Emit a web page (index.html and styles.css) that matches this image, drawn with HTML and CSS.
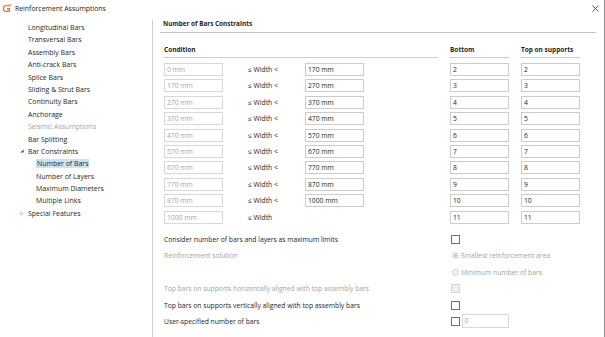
FILE: index.html
```html
<!DOCTYPE html>
<html>
<head>
<meta charset="utf-8">
<link rel="stylesheet" href="styles.css">
</head>
<body>
<div class="window">
  <div class="titlebar">
    <svg class="app-icon" viewBox="0 0 10 9" aria-hidden="true">
      <path d="M8.6 1.6 H4.2 Q1.4 1.6 1.4 4.5 Q1.4 7.4 4.2 7.4 H7.4 V4.8 H5" fill="none" stroke="#e9792b" stroke-width="1.4"/>
      <path d="M6.6 0.6 L9.6 0.6" stroke="#f4a45d" stroke-width="0.8"/>
    </svg>
    <span class="title">Reinforcement Assumptions</span>
    <svg class="close" viewBox="0 0 8 8" aria-hidden="true">
      <path d="M0.5 0.5 L7.5 7.5 M7.5 0.5 L0.5 7.5" stroke="#333" stroke-width="0.9"/>
    </svg>
  </div>
  <div class="main">
    <ul class="tree">
      <li class="node">Longitudinal Bars</li>
      <li class="node">Transversal Bars</li>
      <li class="node">Assembly Bars</li>
      <li class="node">Anti-crack Bars</li>
      <li class="node">Splice Bars</li>
      <li class="node">Sliding &amp; Strut Bars</li>
      <li class="node">Continuity Bars</li>
      <li class="node">Anchorage</li>
      <li class="node muted">Seismic Assumptions</li>
      <li class="node">Bar Splitting</li>
      <li class="node toggled"><span class="toggle"><svg viewBox="0 0 5 5" class="tri"><path d="M4.5 0.5 V4.5 H0.5 Z" fill="#4a4a4a"/></svg></span>Bar Constraints</li>
      <li class="node sub"><span class="sel">Number of Bars</span></li>
      <li class="node sub">Number of Layers</li>
      <li class="node sub">Maximum Diameters</li>
      <li class="node sub">Multiple Links</li>
      <li class="node toggled"><span class="toggle"><svg viewBox="0 0 5 6" class="tri2"><path d="M1 0.8 L4.2 3 L1 5.2 Z" fill="none" stroke="#a0a0a0" stroke-width="0.7"/></svg></span>Special Features</li>
    </ul>
    <section class="panel">
      <div class="heading">Number of Bars Constraints</div>
      <div class="grid">
        <div class="col-head">Condition</div>
        <div class="col-head">Bottom</div>
        <div class="col-head">Top on supports</div>

        <div class="cond"><span class="field dim">0 mm</span><span class="op">≤ Width &lt;</span><span class="field">170 mm</span></div>
        <div class="cell"><span class="field">2</span></div>
        <div class="cell"><span class="field">2</span></div>

        <div class="cond"><span class="field dim">170 mm</span><span class="op">≤ Width &lt;</span><span class="field">270 mm</span></div>
        <div class="cell"><span class="field">3</span></div>
        <div class="cell"><span class="field">3</span></div>

        <div class="cond"><span class="field dim">270 mm</span><span class="op">≤ Width &lt;</span><span class="field">370 mm</span></div>
        <div class="cell"><span class="field">4</span></div>
        <div class="cell"><span class="field">4</span></div>

        <div class="cond"><span class="field dim">370 mm</span><span class="op">≤ Width &lt;</span><span class="field">470 mm</span></div>
        <div class="cell"><span class="field">5</span></div>
        <div class="cell"><span class="field">5</span></div>

        <div class="cond"><span class="field dim">470 mm</span><span class="op">≤ Width &lt;</span><span class="field">570 mm</span></div>
        <div class="cell"><span class="field">6</span></div>
        <div class="cell"><span class="field">6</span></div>

        <div class="cond"><span class="field dim">570 mm</span><span class="op">≤ Width &lt;</span><span class="field">670 mm</span></div>
        <div class="cell"><span class="field">7</span></div>
        <div class="cell"><span class="field">7</span></div>

        <div class="cond"><span class="field dim">670 mm</span><span class="op">≤ Width &lt;</span><span class="field">770 mm</span></div>
        <div class="cell"><span class="field">8</span></div>
        <div class="cell"><span class="field">8</span></div>

        <div class="cond"><span class="field dim">770 mm</span><span class="op">≤ Width &lt;</span><span class="field">870 mm</span></div>
        <div class="cell"><span class="field">9</span></div>
        <div class="cell"><span class="field">9</span></div>

        <div class="cond"><span class="field dim">870 mm</span><span class="op">≤ Width &lt;</span><span class="field">1000 mm</span></div>
        <div class="cell"><span class="field">10</span></div>
        <div class="cell"><span class="field">10</span></div>

        <div class="cond"><span class="field dim">1000 mm</span><span class="op">≤ Width</span></div>
        <div class="cell"><span class="field">11</span></div>
        <div class="cell"><span class="field">11</span></div>
      </div>

      <div class="options">
        <div class="opt-label">Consider number of bars and layers as maximum limits</div>
        <div class="opt-ctrl"><span class="cb"></span></div>

        <div class="opt-label muted">Reinforcement solution</div>
        <div class="opt-ctrl muted"><span class="radio on"></span>Smallest reinforcement area</div>

        <div class="opt-label"></div>
        <div class="opt-ctrl muted"><span class="radio"></span>Minimum number of bars</div>

        <div class="opt-label muted">Top bars on supports horizontally aligned with top assembly bars</div>
        <div class="opt-ctrl"><span class="cb disabled"></span></div>

        <div class="opt-label">Top bars on supports vertically aligned with top assembly bars</div>
        <div class="opt-ctrl"><span class="cb"></span></div>

        <div class="opt-label">User-specified number of bars</div>
        <div class="opt-ctrl"><span class="cb"></span><span class="field small dim">0</span></div>
      </div>
    </section>
  </div>
</div>
</body>
</html>
```

FILE: styles.css
```css
* { box-sizing: border-box; margin: 0; padding: 0; }

body {
  width: 605px;
  height: 337px;
  overflow: hidden;
  background: #ffffff;
  font-family: "Open Sans", "Noto Sans", sans-serif;
  font-size: 6.75px;
  color: #1e1e1e;
}

.window {
  width: 605px;
  height: 337px;
  border-right: 1px solid #8c8c8c;
  display: flex;
  flex-direction: column;
}

.titlebar {
  height: 16px;
  display: flex;
  align-items: center;
  padding: 0 5px 0 2px;
  font-size: 6.9px;
  color: #222;
}

.app-icon { width: 10px; height: 9px; margin-right: 3px; }
.title { flex: 1; }
.close { width: 7px; height: 7px; }

.main {
  flex: 1;
  display: flex;
  min-height: 0;
}

.tree {
  width: 153px;
  margin-top: 4px;
  padding-top: 1.3px;
  border-right: 1px solid #cfcfcf;
  list-style: none;
  font-size: 6.95px;
}

.node {
  display: flex;
  align-items: center;
  height: 12.4px;
  padding-left: 28px;
  white-space: nowrap;
  color: #262626;
}

.node.toggled { padding-left: 20px; }
.node.sub { padding-left: 36px; }
.muted { color: #a3a3a3 !important; }

.toggle {
  width: 8px;
  display: flex;
  align-items: center;
}
.tri { width: 4px; height: 4px; }
.tri2 { width: 4px; height: 5px; }

.sel {
  background: #c9e4f1;
  padding: 0 1px;
  line-height: 9px;
}

.panel {
  flex: 1;
  padding: 2px 8px 0 7px;
  display: flex;
  flex-direction: column;
}

.heading {
  line-height: 12px;
  padding: 0 0 2px 3px;
  font-weight: 700;
  font-size: 6.4px;
  border-bottom: 1px solid #c4c4c4;
}

.grid {
  display: grid;
  grid-template-columns: 275px 60px 60px;
  column-gap: 11px;
  row-gap: 3.4px;
  margin: 11px 0 0 3px;
}

.col-head {
  font-weight: 700;
  font-size: 6.5px;
  line-height: 12px;
  padding: 0 0 1px 1px;
  border-bottom: 1px solid #d0d0d0;
  margin-bottom: 1.6px;
}

.cond, .cell {
  display: flex;
  align-items: center;
  padding-left: 1px;
}

.field {
  display: block;
  width: 59px;
  height: 13px;
  border: 1px solid #cccccc;
  padding-left: 2px;
  line-height: 11px;
  color: #1e1e1e;
  background: #fff;
  white-space: nowrap;
}

.field.dim { color: #a6a6a6; border-color: #d8d8d8; }

.op {
  width: 57px;
  margin-left: 25px;
}

.options {
  display: grid;
  grid-template-columns: 286px 1fr;
  grid-auto-rows: 16.4px;
  margin: 7.8px 0 0 4px;
}

.opt-label {
  display: flex;
  align-items: center;
  white-space: nowrap;
}

.opt-ctrl {
  display: flex;
  align-items: center;
  white-space: nowrap;
}

.cb {
  width: 9px;
  height: 9px;
  border: 1px solid #707070;
  background: #fff;
  margin-left: 1px;
}

.cb.disabled {
  border-color: #d6d6d6;
  background: #efefef;
}

.radio {
  width: 7px;
  height: 7px;
  border-radius: 50%;
  border: 1px solid #d2d2d2;
  background: #f2f2f2;
  margin: 0 2px 0 2px;
  display: flex;
  align-items: center;
  justify-content: center;
}

.radio.on::after {
  content: "";
  width: 3px;
  height: 3px;
  border-radius: 50%;
  background: #bcbcbc;
}

.field.small {
  width: 47px;
  height: 14px;
  margin-left: 1.5px;
  line-height: 12px;
}
```
